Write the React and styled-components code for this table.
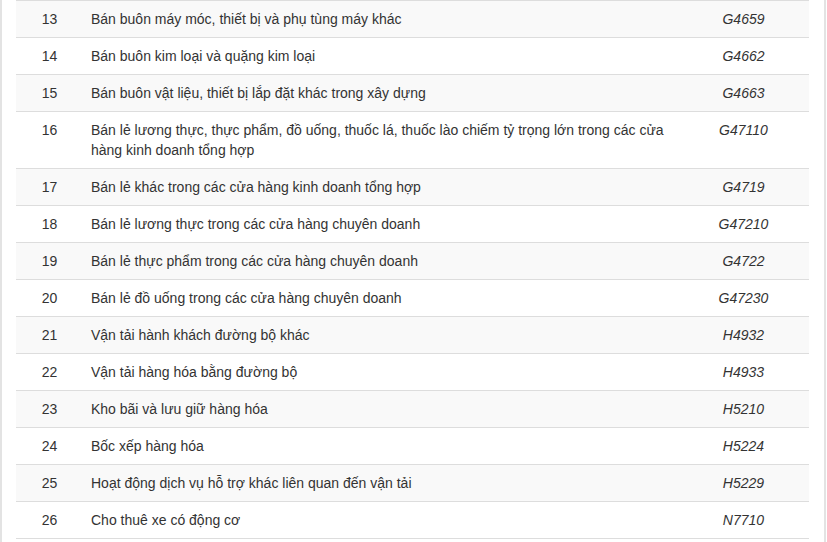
import React from 'react';
import styled, { createGlobalStyle } from 'styled-components';

const GlobalStyle = createGlobalStyle`
  html, body {
    margin: 0;
    padding: 0;
    background: #fff;
  }
  body {
    font-family: "Liberation Sans", Arial, Helvetica, sans-serif;
    font-size: 14px;
    line-height: 20px;
    color: #333;
  }
`;

const rows = [
  ['13', 'Bán buôn máy móc, thiết bị và phụ tùng máy khác', 'G4659'],
  ['14', 'Bán buôn kim loại và quặng kim loại', 'G4662'],
  ['15', 'Bán buôn vật liệu, thiết bị lắp đặt khác trong xây dựng', 'G4663'],
  ['16', 'Bán lẻ lương thực, thực phẩm, đồ uống, thuốc lá, thuốc lào chiếm tỷ trọng lớn trong các cửa hàng kinh doanh tổng hợp', 'G47110'],
  ['17', 'Bán lẻ khác trong các cửa hàng kinh doanh tổng hợp', 'G4719'],
  ['18', 'Bán lẻ lương thực trong các cửa hàng chuyên doanh', 'G47210'],
  ['19', 'Bán lẻ thực phẩm trong các cửa hàng chuyên doanh', 'G4722'],
  ['20', 'Bán lẻ đồ uống trong các cửa hàng chuyên doanh', 'G47230'],
  ['21', 'Vận tải hành khách đường bộ khác', 'H4932'],
  ['22', 'Vận tải hàng hóa bằng đường bộ', 'H4933'],
  ['23', 'Kho bãi và lưu giữ hàng hóa', 'H5210'],
  ['24', 'Bốc xếp hàng hóa', 'H5224'],
  ['25', 'Hoạt động dịch vụ hỗ trợ khác liên quan đến vận tải', 'H5229'],
  ['26', 'Cho thuê xe có động cơ', 'N7710'],
];

const Panel = styled.div`
  box-sizing: border-box;
  width: 826px;
  border-left: 2px solid #e3e3e3;
  border-right: 2px solid #e3e3e3;
  padding: 0 15px 4px 14px;
`;

const Table = styled.table`
  width: 793px;
  border-collapse: collapse;
  border-spacing: 0;
  table-layout: fixed;
  border-bottom: 1px solid #ddd;
`;

const Row = styled.tr`
  background: ${p => (p.$striped ? '#f9f9f9' : '#fff')};
`;

const Cell = styled.td`
  padding: 8px;
  border-top: 1px solid #ddd;
  vertical-align: top;
  line-height: 20px;
  text-align: ${p => p.$align || 'left'};
  font-style: ${p => (p.$italic ? 'italic' : 'normal')};
`;

export default function App() {
  return (
    <>
      <GlobalStyle />
      <Panel>
        <Table>
          <colgroup>
            <col style={{ width: 67 }} />
            <col style={{ width: 595 }} />
            <col style={{ width: 131 }} />
          </colgroup>
          <tbody>
            {rows.map(([no, name, code]) => (
              <Row key={no} $striped={Number(no) % 2 === 1}>
                <Cell $align="center">{no}</Cell>
                <Cell>{name}</Cell>
                <Cell $align="center" $italic>{code}</Cell>
              </Row>
            ))}
          </tbody>
        </Table>
      </Panel>
    </>
  );
}
